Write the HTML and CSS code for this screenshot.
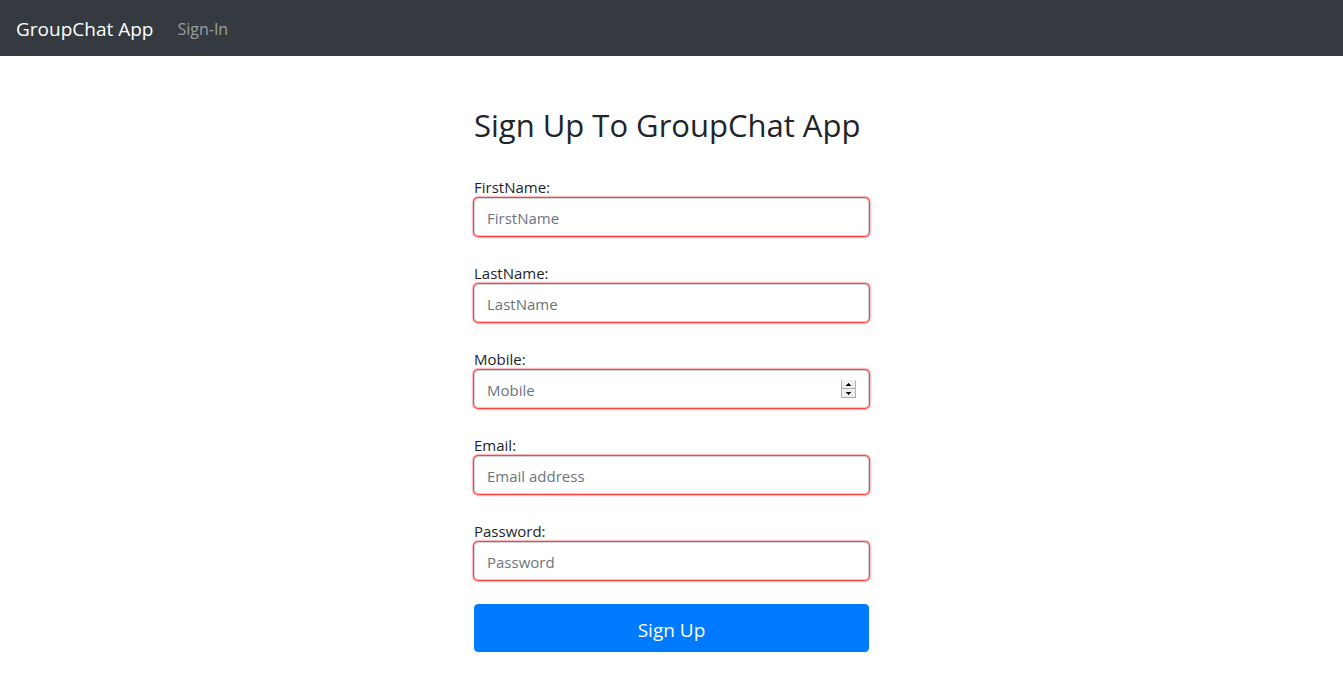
FILE: index.html
```html
<!DOCTYPE html>
<html lang="en">
<head>
<meta charset="utf-8">
<meta name="viewport" content="width=device-width, initial-scale=1">
<title>GroupChat App</title>
<link rel="stylesheet" href="styles.css">
</head>
<body>
<nav class="navbar">
  <a class="brand" href="#">GroupChat App</a>
  <a class="nav-link" href="#">Sign-In</a>
</nav>
<main class="page">
  <form class="signup">
    <h1 class="title">Sign Up To GroupChat App</h1>
    <div class="field">
      <label class="label" for="first">FirstName:</label>
      <input class="control" id="first" type="text" placeholder="FirstName" required>
    </div>
    <div class="field">
      <label class="label" for="last">LastName:</label>
      <input class="control" id="last" type="text" placeholder="LastName" required>
    </div>
    <div class="field">
      <label class="label" for="mobile">Mobile:</label>
      <div class="number">
        <input class="control" id="mobile" type="number" placeholder="Mobile" required>
        <span class="spinner">
          <button class="step" type="button" aria-label="Increase"><svg class="arrow" viewBox="0 0 5 3"><path d="M2 0h1v1h1v1h1v1H0V2h1V1h1z"/></svg></button>
          <button class="step" type="button" aria-label="Decrease"><svg class="arrow" viewBox="0 0 5 3"><path d="M0 0h5v1H4v1H3v1H2V2H1V1H0z"/></svg></button>
        </span>
      </div>
    </div>
    <div class="field">
      <label class="label" for="email">Email:</label>
      <input class="control" id="email" type="email" placeholder="Email address" required>
    </div>
    <div class="field">
      <label class="label" for="password">Password:</label>
      <input class="control" id="password" type="password" placeholder="Password" required>
    </div>
    <button class="submit" type="submit">Sign Up</button>
  </form>
</main>
</body>
</html>
```
FILE: styles.css
```css
*, *::before, *::after { box-sizing: border-box; }

body {
  margin: 0;
  background: #fff;
  color: #212529;
  font-family: "Segoe UI", "Open Sans", "Noto Sans", sans-serif;
  font-size: 15px;
  line-height: 22px;
}

.navbar {
  display: flex;
  align-items: center;
  gap: 24px;
  min-height: 56px;
  padding: 10px 16px 8px;
  background: #343a40;
}

.brand, .nav-link { text-decoration: none; }

.brand {
  color: #fff;
  font-size: 19px;
  line-height: 30px;
}

.nav-link {
  color: rgba(255, 255, 255, .5);
  font-size: 16px;
}

.page { padding: 50px 16px 48px; }

.signup {
  display: flex;
  flex-direction: column;
  gap: 24px;
  max-width: 395px;
  margin: 0 auto;
}

.title {
  margin: 0 0 6px;
  font-size: 31px;
  font-weight: 400;
  line-height: 38px;
  white-space: nowrap;
}

.field {
  display: flex;
  flex-direction: column;
}

.label {
  padding-top: 2px;
  color: #212529;
}

.control {
  width: 100%;
  height: 38px;
  padding: 8px 12px 6px;
  border: 1px solid #ced4da;
  border-radius: 4px;
  background: #fff;
  color: #495057;
  font: inherit;
  box-shadow: 0 0 2px 1px red;
  appearance: textfield;
}

.control::placeholder {
  color: #6c757d;
  opacity: 1;
}

.control::-webkit-inner-spin-button { appearance: none; }

.number { position: relative; }

.spinner {
  position: absolute;
  top: 10px;
  right: 13px;
  display: flex;
  flex-direction: column;
  width: 15px;
  background: #f0f0f0;
}

.step {
  display: flex;
  align-items: center;
  justify-content: center;
  height: 9px;
  padding: 0;
  border: 1px solid #adadad;
  border-top-color: #f0f0f0;
  background: #f0f0f0;
}

.arrow {
  width: 5px;
  height: 3px;
  fill: #000;
}

.submit {
  height: 48px;
  padding: 10px 16px 6px;
  border: 1px solid #007bff;
  border-radius: 4px;
  background: #007bff;
  color: #fff;
  font-family: inherit;
  font-size: 19px;
  line-height: 30px;
}
```
